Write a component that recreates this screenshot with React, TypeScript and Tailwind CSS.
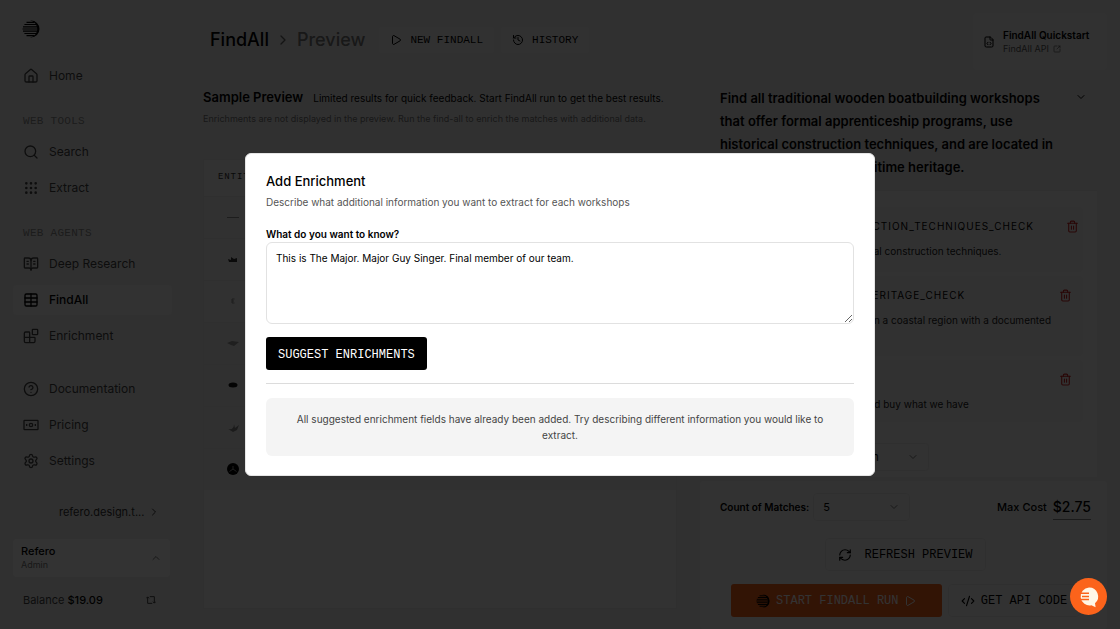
import type { ComponentType, ReactNode } from "react"
import {
  Blocks,
  BookOpenText,
  ChevronDown,
  ChevronRight,
  ChevronUp,
  CircleHelp,
  CodeXml,
  FileCode,
  Grip,
  History,
  House,
  Play,
  RefreshCw,
  Search,
  Settings,
  SquareArrowOutUpRight,
  Table,
  Trash2,
} from "lucide-react"

type IconProps = { className?: string; strokeWidth?: number }

function Logo({ className }: IconProps) {
  return (
    <svg viewBox="0 0 18 18" className={className} aria-hidden="true">
      <path
        d="M8 .5h1a8.500 8.500 0 0 1 0 17H8c4-.8 7.200-4 7.200-8.500S12 1.300 8 .5Z"
        fill="currentColor"
      />
      <path
        d="M4.500 2.300h8M2.400 4.500h12M1 6.800h14M.5 9h15M1 11.200h14M2.400 13.500h12M4.500 15.700h8"
        stroke="currentColor"
        strokeWidth="1.200"
      />
    </svg>
  )
}

function PricingIcon({ className }: IconProps) {
  return (
    <svg
      viewBox="0 0 24 24"
      className={className}
      fill="none"
      stroke="currentColor"
      strokeWidth="2"
      aria-hidden="true"
    >
      <rect x="1.500" y="5" width="21" height="14" rx="1" />
      <circle cx="12" cy="12" r="2.500" />
      <path d="M5.500 10.500v3M18.500 10.500v3" />
    </svg>
  )
}

function SyncIcon({ className }: IconProps) {
  return (
    <svg
      viewBox="0 0 12 12"
      className={className}
      fill="none"
      stroke="currentColor"
      strokeWidth="1.200"
      aria-hidden="true"
    >
      <path d="M4.500 2H10v7.500M8.300 8 10 9.800 11.700 8M7.500 10H2V2.500M.3 4 2 2.200 3.700 4" />
    </svg>
  )
}

type NavEntry = { title: string; icon: ComponentType<IconProps>; active?: boolean }

const webTools: NavEntry[] = [
  { title: "Search", icon: Search },
  { title: "Extract", icon: Grip },
]

const webAgents: NavEntry[] = [
  { title: "Deep Research", icon: BookOpenText },
  { title: "FindAll", icon: Table, active: true },
  { title: "Enrichment", icon: Blocks },
]

const resources: NavEntry[] = [
  { title: "Documentation", icon: CircleHelp },
  { title: "Pricing", icon: PricingIcon },
  { title: "Settings", icon: Settings },
]

const criteria = [
  {
    name: "HISTORICAL_CONSTRUCTION_TECHNIQUES_CHECK",
    text: "Workshop must use historical construction techniques.",
  },
  {
    name: "COASTAL_MARITIME_HERITAGE_CHECK",
    text: "Workshop must be located in a coastal region with a documented maritime heritage.",
  },
  {
    name: "VISITOR_CHECK",
    text: "Guests come to the shop and buy what we have",
  },
]

function NavList({ items }: { items: NavEntry[] }) {
  return (
    <ul>
      {items.map(({ title, icon: Icon, active }) => (
        <li key={title} className="py-[3px]">
          <a
            href="#"
            className={[
              "flex h-[30px] items-center gap-[10px] rounded px-[10px] text-xs",
              active ? "bg-[#f8f8f8] font-medium text-black" : "text-[#444]",
            ].join(" ")}
          >
            <Icon className="size-4" strokeWidth={2} />
            {title}
          </a>
        </li>
      ))}
    </ul>
  )
}

function NavLabel({ children }: { children: ReactNode }) {
  return (
    <h2 className="h-10 px-[10px] pt-5 font-['Liberation_Mono',monospace] text-[11px] leading-[14px] tracking-wide text-[#8c8c8c]">
      {children}
    </h2>
  )
}

function Sidebar() {
  return (
    <aside className="flex w-[185px] shrink-0 flex-col px-[13px] pb-[21px]">
      <a href="#" aria-label="Home page" className="mt-5 mb-5 px-[9px]">
        <Logo className="size-[18px]" />
      </a>
      <nav>
        <NavList items={[{ title: "Home", icon: House }]} />
        <NavLabel>WEB TOOLS</NavLabel>
        <NavList items={webTools} />
        <NavLabel>WEB AGENTS</NavLabel>
        <NavList items={webAgents} />
        <div className="h-[17px]" />
        <NavList items={resources} />
      </nav>
      <div className="mt-auto">
        <a href="#" className="flex items-center justify-between pr-3 pl-[46px] text-[11px] leading-4 text-[#333]">
          refero.design.t...
          <ChevronRight className="size-3" />
        </a>
        <button
          type="button"
          className="mt-[19px] flex h-[38px] w-[157px] items-center justify-between rounded bg-white pr-2 pl-2 text-left"
        >
          <span>
            <span className="block text-[11px] leading-[14px] font-medium">Refero</span>
            <span className="block text-[9px] leading-[14px] text-[#777]">Admin</span>
          </span>
          <ChevronUp className="size-3 text-[#777]" />
        </button>
        <div className="mt-[15px] flex items-center justify-between pr-4 pl-[10px] text-[11px] leading-4 text-[#444]">
          <span>
            Balance <span className="font-medium text-black">$19.09</span>
          </span>
          <button type="button" aria-label="Refresh balance">
            <SyncIcon className="size-[10px]" />
          </button>
        </div>
      </div>
    </aside>
  )
}

function Header() {
  return (
    <header className="flex items-center justify-between pt-[13px]">
      <div className="flex items-center pb-[3px] pl-[7px]">
        <h1 className="flex items-center gap-[6px] text-lg font-medium">
          FindAll
          <ChevronRight className="size-4 text-[#666]" />
          <span className="text-[#777]">Preview</span>
        </h1>
        <div className="ml-[14px] flex gap-[7px] font-['Liberation_Mono',monospace] text-[11px]">
          <button type="button" className="flex h-[26px] items-center gap-2 rounded-sm bg-[#f6f6f6] px-[11px]">
            <Play className="size-3" />
            NEW FINDALL
          </button>
          <button type="button" className="flex h-[26px] items-center gap-2 rounded-sm bg-[#f6f6f6] px-[11px]">
            <History className="size-3" />
            HISTORY
          </button>
        </div>
      </div>
      <a
        href="#"
        className="flex h-[57px] w-[134px] items-center gap-2 rounded border border-[#f6f6f6] bg-[#f3f3f3] px-[9px]"
      >
        <FileCode className="size-3" />
        <span>
          <span className="block text-[10px] leading-[14px] font-semibold">FindAll Quickstart</span>
          <span className="flex items-center gap-1 text-[9px] leading-[14px] text-[#555]">
            FindAll API
            <SquareArrowOutUpRight className="size-2" />
          </span>
        </span>
      </a>
    </header>
  )
}

function Avatar({ index }: { index: number }) {
  return (
    <svg viewBox="0 0 14 14" className="size-[14px]" aria-hidden="true">
      {index === 0 && <path d="M1 7.500h12" stroke="#777" strokeWidth=".8" fill="none" />}
      {index === 1 && <path d="M2 7l3 1V5l3 2 3-1v4H3z" fill="#333" />}
      {index === 2 && <path d="M8.500 5H6v4h2.500M6 7h2" stroke="#777" fill="none" strokeWidth=".8" />}
      {index === 3 && <path d="M1 7l5-2 7 1-5 4-3-1z" fill="#999" />}
      {index === 4 && <ellipse cx="7" cy="7" rx="4.500" ry="2.500" fill="#111" />}
      {index === 5 && <path d="M2 9c4 1 6-1 6-5l1 4 4-3-2 5-4 2z" fill="#888" />}
      {index === 6 && (
        <>
          <circle cx="7" cy="7" r="6" fill="#000" />
          <path d="M7 4v3M3.500 9.500 7 7l3.500 2.500" stroke="#999" strokeWidth="1" fill="none" />
        </>
      )}
    </svg>
  )
}

function Results() {
  return (
    <section className="min-w-0 flex-1">
      <h2 className="text-[13px] leading-5 font-semibold">
        Sample Preview
        <span className="ml-[10px] text-[10px] font-normal">
          Limited results for quick feedback. Start FindAll run to get the best results.
        </span>
      </h2>
      <p className="mt-[3px] text-[9px] leading-4 text-[#777]">
        Enrichments are not displayed in the preview. Run the find-all to enrich the matches with additional data.
      </p>
      <div className="mt-8 border border-[#e9e9e9]">
        <table className="w-full border-collapse text-left">
          <thead>
            <tr className="h-9 bg-[#f7f7f7]">
              <th className="px-[14px] font-['Liberation_Mono',monospace] text-[9px] font-normal tracking-widest text-[#333]">
                ENTITIES
              </th>
            </tr>
          </thead>
          <tbody>
            {[0, 1, 2, 3, 4, 5, 6].map((row) => (
              <tr
                key={row}
                className={["h-[42px] border-t border-[#ececec]", row < 3 ? "bg-[#f5f5f5]" : "bg-[#f0f0f0]"].join(" ")}
              >
                <td className="px-[22px]">
                  <Avatar index={row} />
                </td>
              </tr>
            ))}
          </tbody>
        </table>
        <div className="h-[118px] bg-[#fafafa]" />
      </div>
    </section>
  )
}

function SelectBox({ id, options, className }: { id: string; options: string[]; className: string }) {
  return (
    <span className="relative flex items-center">
      <select
        id={id}
        className={["h-7 appearance-none rounded-sm border border-[#ebebeb] bg-[#fafafa] px-[9px] text-[11px]", className].join(" ")}
      >
        {options.map((option) => (
          <option key={option}>{option}</option>
        ))}
      </select>
      <ChevronDown className="pointer-events-none absolute right-[10px] size-3 text-[#777]" />
    </span>
  )
}

function Query() {
  return (
    <section className="w-[407px] shrink-0">
      <div className="flex items-start justify-between pr-5 pl-5">
        <h2 className="max-w-[345px] text-[13px] leading-[23px] font-semibold">
          Find all traditional wooden boatbuilding workshops that offer formal apprenticeship programs, use historical
          construction techniques, and are located in coastal regions with maritime heritage.
        </h2>
        <button type="button" aria-label="Collapse" className="mt-1">
          <ChevronDown className="size-3" />
        </button>
      </div>

      <div className="mt-[11px] mr-[10px] border-t border-[#e9e9e9] bg-[#f8f8f8] pr-[14px] pl-[29px]">
        <ul className="pt-4">
          {criteria.map((item, index) => (
            <li
              key={item.name}
              className={[
                "mb-1 rounded border border-[#f2f2f2] bg-[#f6f6f6] pt-[11px] pl-3",
                index === 0 ? "h-[65px] pr-[3px]" : "pr-[10px]",
                index === 1 ? "h-20" : "",
                index === 2 ? "h-[62px]" : "",
              ].join(" ")}
            >
              <div className="flex items-center justify-between">
                <h3 className="text-[10px] leading-[14px] tracking-widest">{item.name}</h3>
                <button type="button" aria-label={`Delete ${item.name}`} className="text-[#c81e1e]">
                  <Trash2 className="size-[13px]" />
                </button>
              </div>
              <p className="mt-[10px] w-[310px] text-[10px] leading-4 text-[#222]">{item.text}</p>
            </li>
          ))}
        </ul>
        <div className="mt-[15px] flex h-10 items-center gap-2">
          <label htmlFor="match" className="w-12 text-[10px]">
            Add new
          </label>
          <SelectBox id="match" options={["Select condition"]} className="w-36" />
        </div>
      </div>

      <div className="mt-1 rounded bg-[#fafafa] pt-3 pr-4 pb-3 pl-5">
        <div className="flex items-center justify-between">
          <div className="flex items-center gap-1">
            <label htmlFor="count" className="text-[10px] font-semibold">
              Count of Matches:
            </label>
            <SelectBox id="count" options={["5", "10", "25"]} className="w-[97px]" />
          </div>
          <p className="flex items-center gap-[6px] text-[11px] font-medium">
            Max Cost
            <span className="border-b border-[#888] text-sm leading-6">$2.75</span>
          </p>
        </div>
        <div className="mt-[17px] flex justify-center font-['Liberation_Mono',monospace] text-xs">
          <button
            type="button"
            className="flex h-[33px] items-center gap-3 rounded-sm border border-[#ebebeb] bg-[#fafafa] px-3"
          >
            <RefreshCw className="size-[14px]" />
            REFRESH PREVIEW
          </button>
        </div>
        <div className="mt-[13px] flex justify-center gap-[6px] font-['Liberation_Mono',monospace] text-xs">
          <button
            type="button"
            className="flex h-[33px] w-[211px] items-center justify-center gap-[6px] rounded-[3px] bg-[#fb631b] text-white"
          >
            <Logo className="size-[14px] text-black" />
            START FINDALL RUN
            <Play className="size-3" />
          </button>
          <button
            type="button"
            className="flex h-[33px] items-center gap-[6px] rounded-sm border border-[#ebebeb] bg-[#fafafa] px-3"
          >
            <CodeXml className="size-[14px]" />
            GET API CODE
          </button>
        </div>
      </div>
    </section>
  )
}

function EnrichmentDialog() {
  return (
    <div className="fixed inset-0 z-40 flex items-center justify-center bg-black/80">
      <div
        role="dialog"
        aria-modal="true"
        aria-labelledby="dialog-title"
        className="w-full max-w-[630px] rounded-md border border-[#e5e5e5] bg-white px-5 py-[19px]"
      >
        <h2 id="dialog-title" className="text-[13px] leading-4 font-medium">
          Add Enrichment
        </h2>
        <p className="mt-[5px] text-[10px] leading-4 text-[#555]">
          Describe what additional information you want to extract for each workshops
        </p>
        <label htmlFor="question" className="mt-4 block text-[10px] leading-4 font-semibold">
          What do you want to know?
        </label>
        <textarea
          id="question"
          className="block h-[82px] w-full rounded-md border border-[#e2e2e2] px-[9px] py-[7px] text-[10px] leading-4"
          defaultValue="This is The Major. Major Guy Singer. Final member of our team."
        />
        <button
          type="button"
          className="mt-[13px] flex h-[33px] items-center rounded-[3px] bg-black px-3 pt-[3px] font-['Liberation_Mono',monospace] text-xs text-white"
        >
          SUGGEST ENRICHMENTS
        </button>
        <hr className="mt-[13px] border-[#dcdcdc]" />
        <p className="mt-[14px] rounded-md bg-[#f4f4f4] px-[26px] py-[13px] text-center text-[10px] leading-4 text-[#444]">
          All suggested enrichment fields have already been added. Try describing different information you would like
          to extract.
        </p>
      </div>
    </div>
  )
}

function FeedbackButton() {
  return (
    <button
      type="button"
      aria-label="Open feedback"
      className="fixed right-[13px] bottom-[14px] z-50 flex size-[37px] items-center justify-center rounded-full bg-[#fb631b]"
    >
      <svg viewBox="0 0 22 22" className="size-[22px]" aria-hidden="true">
        <path d="M11 1.500a9 9 0 0 1 6 15.800l.6 4-4.200-2A9 9 0 1 1 11 1.500Z" fill="#fff6e6" />
        <path d="M1 7.300h10M4 10.400h7M1 13.500h10" stroke="#fb631b" strokeWidth="1.500" />
      </svg>
    </button>
  )
}

export default function App() {
  return (
    <div className="flex min-h-screen bg-[#f1f1f1] font-['Inter',sans-serif] text-black">
      <Sidebar />
      <main className="min-w-0 flex-1 pr-[13px] pl-[18px]">
        <Header />
        <div className="mt-[17px] flex gap-[23px]">
          <Results />
          <Query />
        </div>
      </main>
      <EnrichmentDialog />
      <FeedbackButton />
    </div>
  )
}
